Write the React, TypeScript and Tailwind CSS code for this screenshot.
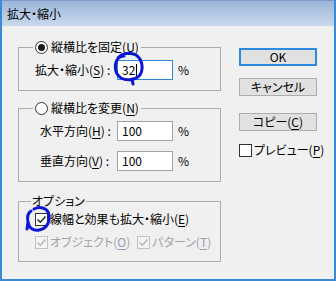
const font = "font-['Noto_Sans_CJK_JP','Noto_Sans_CJK_SC',sans-serif]";

function U({ children }: { children: string }) {
  return <span className="underline underline-offset-2 decoration-1">{children}</span>;
}

function Radio({ checked }: { checked?: boolean }) {
  return (
    <span className="w-[13px] h-[13px] rounded-full border border-[#333] bg-white flex items-center justify-center shrink-0">
      {checked && <span className="w-[7px] h-[7px] rounded-full bg-[#1a1a1a]" />}
    </span>
  );
}

function Check({ checked, disabled }: { checked?: boolean; disabled?: boolean }) {
  const c = disabled ? '#b5b5b5' : '#222';
  return (
    <span
      className={
        'w-[13px] h-[13px] border flex items-center justify-center shrink-0 ' +
        (disabled ? 'border-[#c2c2c2] bg-[#f4f4f4]' : 'border-[#333] bg-white')
      }
    >
      {checked && (
        <svg width="11" height="11" viewBox="0 0 11 11">
          <path d="M1.5 5.5 L4.3 8.3 L9.5 2.5" fill="none" stroke={c} strokeWidth="1.4" />
        </svg>
      )}
    </span>
  );
}

function Field({ value, focused }: { value: string; focused?: boolean }) {
  return (
    <div
      className={
        'w-[56px] h-[20px] bg-white border flex items-center pl-[4px] ' +
        (focused ? 'border-[#2f86dc]' : 'border-[#a3a3a3]')
      }
    >
      <span>{value}</span>
      {focused && <span className="w-px h-[13px] bg-black ml-px" />}
    </div>
  );
}

function Btn({ children, def }: { children: React.ReactNode; def?: boolean }) {
  return (
    <div
      className={
        'w-[78px] h-[18px] flex items-center justify-center bg-[#e1e1e1] ' +
        (def ? 'border-2 border-[#2a8be0]' : 'border border-[#adadad]')
      }
    >
      {children}
    </div>
  );
}

export default function App() {
  return (
    <div
      className={`${font} [font-feature-settings:'palt'] relative w-[336px] h-[281px] flex flex-col bg-[#f0f0f0] text-[12px] leading-[16px] text-black whitespace-nowrap border-x-2 border-b-2 border-[#3a8ad8] overflow-hidden`}
    >
      {/* Title bar */}
      <div className="h-[26px] shrink-0 flex items-center pl-[5px] bg-linear-to-b from-[#9bb6d9] to-[#c9d9ed] border-t border-[#7f9cc4] text-[12px]">
        拡大・縮小
      </div>

      <div className="flex pt-[13px] pl-[16px]">
        {/* Left column */}
        <div className="w-[203px] flex flex-col">
          <fieldset className="border border-[#acacac] pb-[10px]">
            <legend className="ml-[14px] px-[2px]">
              <span className="flex items-center gap-[3px]">
                <Radio checked />
                <span>
                  縦横比を固定(<U>U</U>)
                </span>
              </span>
            </legend>
            <div className="flex items-center pl-[16px] mt-[5px]">
              <span className="w-[82px]">
                拡大・縮小(<U>S</U>) :
              </span>
              <Field value="32" focused />
              <span className="ml-[5px]">%</span>
            </div>
          </fieldset>

          <fieldset className="border border-[#acacac] pb-[10px] mt-[9px]">
            <legend className="ml-[14px] px-[2px]">
              <span className="flex items-center gap-[3px]">
                <Radio />
                <span>
                  縦横比を変更(<U>N</U>)
                </span>
              </span>
            </legend>
            <div className="flex items-center pl-[21px] mt-[5px]">
              <span className="w-[77px]">
                水平方向(<U>H</U>) :
              </span>
              <Field value="100" />
              <span className="ml-[5px]">%</span>
            </div>
            <div className="flex items-center pl-[21px] mt-[10px]">
              <span className="w-[77px]">
                垂直方向(<U>V</U>) :
              </span>
              <Field value="100" />
              <span className="ml-[5px]">%</span>
            </div>
          </fieldset>

          <fieldset className="border border-[#acacac] pb-[11px] mt-[11px]">
            <legend className="ml-[12px] px-[1px]">オプション</legend>
            <div className="flex items-center gap-[2px] pl-[16px] mt-[2px]">
              <Check checked />
              <span>
                線幅と効果も拡大・縮小(<U>E</U>)
              </span>
            </div>
            <div className="flex items-center pl-[16px] mt-[7px] text-[#a3a3a3]">
              <Check checked disabled />
              <span className="ml-[2px]">
                オブジェクト(<span className="underline underline-offset-2 text-[#8f9fb6]">O</span>)
              </span>
              <span className="ml-[7px]">
                <Check checked disabled />
              </span>
              <span className="ml-[2px]">
                パターン(<span className="underline underline-offset-2 text-[#8f9fb6]">T</span>)
              </span>
            </div>
          </fieldset>
        </div>

        {/* Right column */}
        <div className="ml-[18px] flex flex-col">
          <div className="mt-[9px]">
            <Btn def>OK</Btn>
          </div>
          <div className="mt-[12px]">
            <Btn>キャンセル</Btn>
          </div>
          <div className="mt-[17px]">
            <Btn>
              <span>
                コピー(<U>C</U>)
              </span>
            </Btn>
          </div>
          <div className="flex items-center gap-[2px] mt-[11px]">
            <Check />
            <span>
              プレビュー(<U>P</U>)
            </span>
          </div>
        </div>
      </div>

      {/* hand-drawn marks */}
      <svg
        className="absolute left-[-2px] top-0 pointer-events-none"
        width="336"
        height="281"
        viewBox="0 0 336 281"
      >
        <g fill="none" stroke="#0b16d6" strokeWidth="3" strokeLinecap="round" strokeLinejoin="round">
          <path d="M118 58 C 122 53, 130 52, 136 55 C 142 59, 144 68, 140 75 C 136 80, 127 81, 121 78 C 115 74, 114 66, 117 60 C 119 57, 121 56, 124 56 M132 79 L 133 84" />
          <path d="M34 209 C 40 206, 48 208, 49 215 C 50 223, 46 229, 39 230 C 33 231, 29 228, 28 222 C 27 217, 28 213, 31 211 M28 222 L 27 229" />
        </g>
      </svg>
    </div>
  );
}
